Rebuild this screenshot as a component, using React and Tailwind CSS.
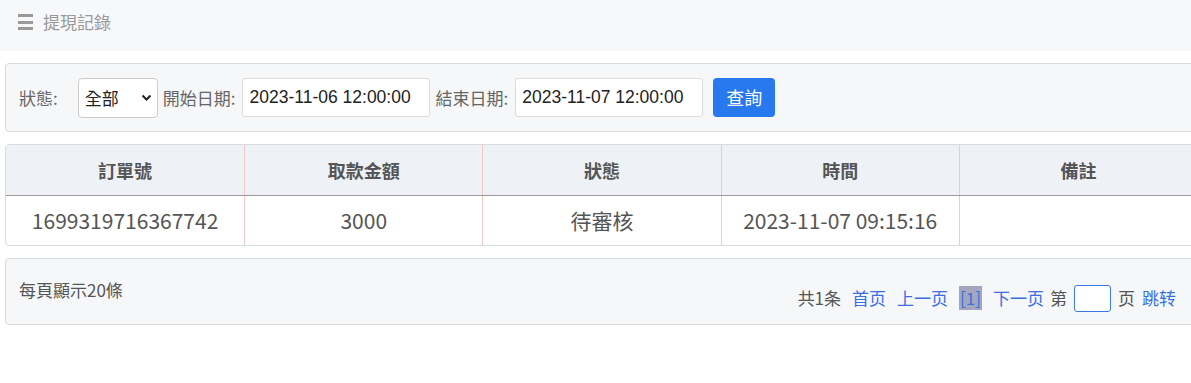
const COLUMNS = ['訂單號', '取款金額', '狀態', '時間', '備註']
const ROWS = [['1699319716367742', '3000', '待審核', '2023-11-07 09:15:16', '']]

const cjk = { fontFamily: '"Microsoft YaHei", "Noto Sans CJK TC", "Noto Sans", sans-serif' }
const latin = { fontFamily: '"Liberation Sans", Arial, sans-serif' }

export default function App() {
  return (
    <div className="w-full min-h-[383px] bg-white overflow-hidden" style={cjk}>
      {/* page title */}
      <div className="h-[51px] bg-[#f7f8fa] flex items-start pt-[12px] pl-[18px]">
        <div className="flex flex-col gap-[3.5px] w-[15px] mr-[10px] mt-[2px]">
          <span className="h-[3px] bg-[#9a9a9a]" />
          <span className="h-[3px] bg-[#9a9a9a]" />
          <span className="h-[3px] bg-[#9a9a9a]" />
        </div>
        <span className="text-[17px] text-[#999] leading-[20px]">提現記錄</span>
      </div>

      <div className="w-[1193px] ml-[5px]">
        {/* filters */}
        <div className="mt-[12px] h-[69px] bg-[#f6f7f9] border border-[#d8dbdf] rounded-[4px] flex items-center pl-[13px] text-[17px] text-[#666]">
          <span className="mr-[20px]">狀態:</span>
          <div className="relative w-[80px] h-[40px] bg-white border border-[#ccc] rounded-[4px] flex items-center pl-[6px] text-[#222]">
            全部
            <svg className="absolute right-[5px] top-[15px]" width="11" height="8" viewBox="0 0 11 8">
              <path d="M1.5 1.5 L5.5 5.5 L9.5 1.5" fill="none" stroke="#222" strokeWidth="2" />
            </svg>
          </div>
          <span className="ml-[5px]">開始日期:</span>
          <div className="ml-[7px] w-[188px] h-[39px] bg-white border border-[#dcdcdc] rounded-[3px] flex items-center pl-[6px] text-[17.5px] text-[#222]" style={latin}>
            2023-11-06 12:00:00
          </div>
          <span className="ml-[5px]">結束日期:</span>
          <div className="ml-[7px] w-[188px] h-[39px] bg-white border border-[#dcdcdc] rounded-[3px] flex items-center pl-[6px] text-[17.5px] text-[#222]" style={latin}>
            2023-11-07 12:00:00
          </div>
          <button className="ml-[10px] w-[62px] h-[39px] bg-[#2878f0] rounded-[4px] text-white text-[18px]">查詢</button>
        </div>

        {/* table */}
        <div className="mt-[12px] border border-[#d8dbdf] rounded-[4px] overflow-hidden">
          <div className="grid grid-cols-5 h-[51px] bg-[#eef2f6] border-b border-[#999]">
            {COLUMNS.map((c, i) => (
              <div key={c} className={`flex items-center justify-center text-[18px] font-bold text-[#555] ${i > 0 ? 'border-l border-[#f3c8c8]' : ''}`}>
                {c}
              </div>
            ))}
          </div>
          {ROWS.map((r, ri) => (
            <div key={ri} className="grid grid-cols-5 h-[49px]">
              {r.map((v, i) => (
                <div key={i} className={`flex items-center justify-center text-[21px] text-[#555] ${i > 0 ? 'border-l border-[#f3c8c8]' : ''}`}>
                  {v}
                </div>
              ))}
            </div>
          ))}
        </div>

        {/* pager */}
        <div className="mt-[12px] h-[67px] bg-[#f6f7f9] border border-[#d8dbdf] rounded-[4px] flex justify-between pl-[13px] pr-[21px] text-[17px] text-[#555]">
          <span className="mt-[18px]">每頁顯示20條</span>
          <div className="flex items-center mt-[25px] h-[28px]">
            <span>共1条</span>
            <span className="ml-[11px] text-[#3a6fe0]">首页</span>
            <span className="ml-[11px] text-[#3a6fe0]">上一页</span>
            <span className="ml-[11px] bg-[#a4a6bd] text-[#3a6fe0] h-[24px] flex items-center px-[1px]">[1]</span>
            <span className="ml-[11px] text-[#3a6fe0]">下一页</span>
            <span className="ml-[6px]">第</span>
            <span className="ml-[7px] w-[37px] h-[27px] bg-white border border-[#3a78e8] rounded-[3px]" />
            <span className="ml-[7px]">页</span>
            <span className="ml-[7px] text-[#3a6fe0]">跳转</span>
          </div>
        </div>
      </div>
    </div>
  )
}
